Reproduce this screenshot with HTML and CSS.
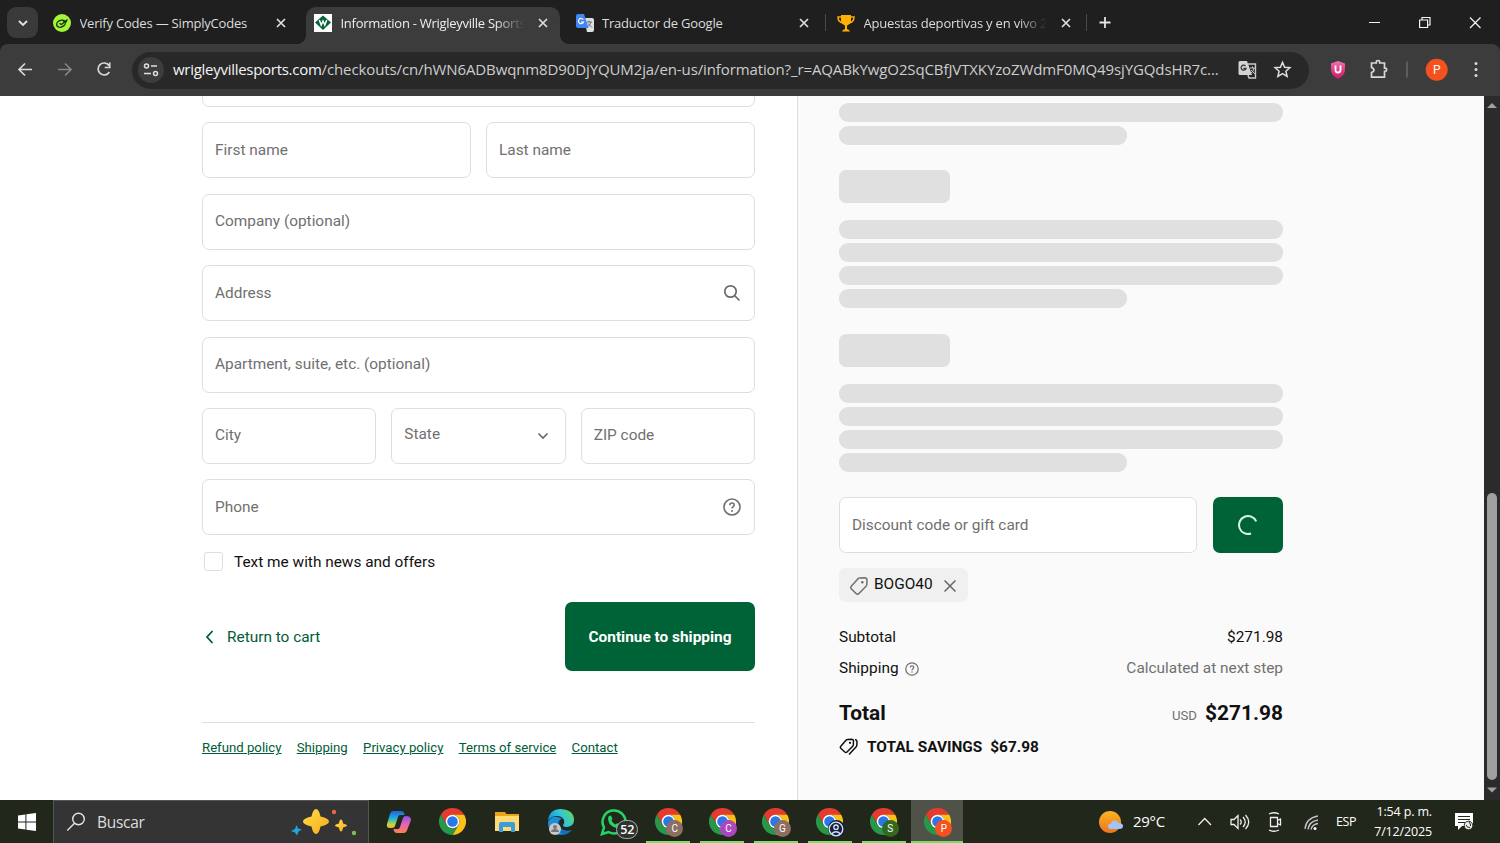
FILE: index.html
```html
<!DOCTYPE html>
<html lang="en">
<head>
<meta charset="utf-8">
<title>Information - Wrigleyville Sports - Checkout</title>
<link rel="stylesheet" href="styles.css">
</head>
<body>
<svg class="defs" width="0" height="0">
  <defs>
    <symbol id="chrome" viewBox="0 0 24 24">
      <path fill="#e33b2e" d="M1.6 6A12 12 0 0 1 22.4 6L12 6.5A6 6 0 0 0 6.8 15Z"/>
      <path fill="#fbc116" d="M22.4 6A12 12 0 0 1 12 24L17.2 15A6 6 0 0 0 12 6Z"/>
      <path fill="#279847" d="M12 24A12 12 0 0 1 1.6 6L6.8 15A6 6 0 0 0 17.2 15Z"/>
      <circle cx="12" cy="12" r="6" fill="#fff"/><circle cx="12" cy="12" r="4.7" fill="#2878ea"/>
    </symbol>
    <symbol id="close" viewBox="0 0 18 18"><path d="M5 5l8 8M13 5l-8 8" fill="none" stroke="#dedede" stroke-width="1.7"/></symbol>
    <symbol id="help" viewBox="0 0 18 18"><g fill="none" stroke="#707070" stroke-width="1.6"><circle cx="9" cy="9" r="8"/><path d="M6.8 7.2C6.8 4.2 11.3 4.3 11.2 7C11.1 8.7 9 8.7 9 10.6"/></g><circle cx="9" cy="12.9" r="1" fill="#707070"/></symbol>
    <linearGradient id="cop1" x2="0" y2="1"><stop offset="0" stop-color="#1d62e8"/><stop offset=".45" stop-color="#21b5d2"/><stop offset=".8" stop-color="#c4d43c"/><stop offset="1" stop-color="#ffb02e"/></linearGradient>
    <linearGradient id="cop2" x2="0" y2="1"><stop offset="0" stop-color="#8d54e8"/><stop offset=".5" stop-color="#e864b4"/><stop offset="1" stop-color="#ff8050"/></linearGradient>
    <linearGradient id="edge1" x1="0" y1=".6" x2="1" y2=".2"><stop offset="0" stop-color="#158edb"/><stop offset=".5" stop-color="#31c3df"/><stop offset="1" stop-color="#5bd95c"/></linearGradient>
    <linearGradient id="sun" x2="0" y2="1"><stop offset="0" stop-color="#f9b424"/><stop offset="1" stop-color="#ef741e"/></linearGradient>
    <linearGradient id="star" x2="1" y2="1"><stop offset="0" stop-color="#ffdf4a"/><stop offset="1" stop-color="#f8a917"/></linearGradient>
    <linearGradient id="shield" x2="0" y2="1"><stop offset="0" stop-color="#ef78ae"/><stop offset=".5" stop-color="#e23b87"/><stop offset="1" stop-color="#d01c68"/></linearGradient>
  </defs>
</svg>

<header class="tabstrip">
  <button class="tab-search"><svg width="12" height="8" viewBox="0 0 12 8"><path d="M2 2l4 4 4-4" fill="none" stroke="#e4e4e4" stroke-width="1.8"/></svg></button>
  <div class="tab tab-codes">
    <svg class="favicon" viewBox="0 0 18 18"><circle cx="9" cy="9" r="9" fill="#a4f43c"/><g fill="none" stroke="#17330c" stroke-width="1.4"><ellipse cx="8" cy="9.700" rx="4.500" ry="3.300" transform="rotate(-25 8 9.700)"/><path d="M6.500 9.300l2 1.200 6-5M10 7l4 .8"/></g></svg>
    <span class="title">Verify Codes — SimplyCodes</span><svg class="x"><use href="#close"/></svg>
  </div>
  <div class="tab tab-active">
    <svg class="favicon" viewBox="0 0 18 18"><path fill="#fff" d="M0 0h18v18H0z"/><path fill="#07623b" d="M9 1.500L17 8.500 9 16 1 8.500z"/><path d="M5.300 6l1.900 5L9 7l1.800 4 1.900-5" fill="none" stroke="#fff" stroke-width="1.5"/></svg>
    <span class="title fade">Information - Wrigleyville Sports</span><svg class="x"><use href="#close"/></svg>
  </div>
  <div class="tab tab-translate">
    <svg class="favicon" viewBox="0 0 18 18"><path fill="#dce0e5" d="M8 4h8q2 0 2 2v10q0 2-2 2h-5z"/><path fill="#4285f4" d="M2 0h6l4.500 14H2q-2 0-2-2V2Q0 0 2 0z"/><path d="M7.300 5.700A2.600 2.600 0 1 0 7.500 8H5" fill="none" stroke="#fff" stroke-width="1.200"/><path d="M10.500 8h5.500M13 6.500V8M15 8q-1 4-4 5M12 9.500l4 4" fill="none" stroke="#62717e"/></svg>
    <span class="title">Traductor de Google</span><svg class="x"><use href="#close"/></svg>
  </div>
  <div class="tab tab-bets">
    <svg class="favicon" viewBox="0 0 18 18"><path d="M5 3H1q0 5 5 6M13 3h4q0 5-5 6" fill="none" stroke="#f8ac08" stroke-width="1.500"/><path fill="#ffb300" d="M4 1h10v5q0 4-4 5.500V15q2.500.5 3 2.500H5q.5-2 3-2.500v-3.500Q4 10 4 6z"/></svg>
    <span class="title fade">Apuestas deportivas y en vivo 24</span><svg class="x"><use href="#close"/></svg>
  </div>
  <svg class="new-tab" width="36" height="44" viewBox="0 0 36 44"><path d="M18 17v11M12.500 22.500h11" stroke="#e3e3e3" stroke-width="1.800"/></svg>
  <svg class="window-controls" width="150" height="44" viewBox="0 0 150 44"><g fill="none" stroke="#f4f4f4" stroke-width="1.200"><path d="M19 22.500h11M69.600 20h8v7.500h-8zM72 20v-2.500h8V25h-2.400M120 17.500l10.500 10.500M130.500 17.500L120 28"/></g></svg>
</header>

<nav class="toolbar">
  <svg class="nav-icons" width="132" height="52" viewBox="0 0 132 52"><g fill="none" stroke-width="1.700"><path stroke="#d9d9d9" d="M32 25.500H19.500M25 19.500l-6 6 6 6"/><path stroke="#858585" d="M58 25.500h12.500M65 19.500l6 6-6 6"/><path stroke="#d9d9d9" d="M109 21.500a6 6 0 1 0 .3 6.500M109.700 18.500v5h-5"/></g></svg>
  <div class="omnibox">
    <svg class="site-info" width="26" height="26" viewBox="0 0 26 26"><circle cx="13" cy="13" r="13" fill="#3d3d3d"/><g fill="none" stroke="#dedede" stroke-width="1.500"><circle cx="8.500" cy="9" r="2"/><path d="M13 9h6M6 16.500h7"/><circle cx="17.500" cy="16.500" r="2"/></g></svg>
    <span class="url"><b>wrigleyvillesports.com</b>/checkouts/cn/hWN6ADBwqnm8D90DjYQUM2ja/en-us/information?_r=AQABkYwgO2SqCBfJVTXKYzoZWdmF0MQ49sjYGQdsHR7c...</span>
    <svg class="omni-icons" width="60" height="26" viewBox="0 0 60 26"><path fill="#d3d3d3" d="M3 4h7l5 14H3q-1.500 0-1.500-1.500v-11Q1.500 4 3 4z"/><path d="M11 7h7.500v14H12l-1-3" fill="none" stroke="#c9c9c9" stroke-width="1.400"/><path d="M8.500 9A2.500 2.500 0 1 0 9 11.500H6.500" fill="none" stroke="#333" stroke-width="1.300"/><path d="M13 11h5M15.500 9.500V11M17 11q-.5 4-3.500 5.500M14 13l4 4" stroke="#c9c9c9" fill="none"/><path d="M45.500 5.300l2.100 4.900 5.300.5-4 3.500 1.200 5.200-4.600-2.800-4.600 2.800 1.200-5.200-4-3.500 5.300-.5z" fill="none" stroke="#dedede" stroke-width="1.500"/></svg>
  </div>
  <svg class="actions" width="191" height="52" viewBox="0 0 191 52"><path fill="url(#shield)" d="M29 17l7 2.500V26q0 5-7 9-7-4-7-9v-6.500z"/><path d="M26.500 21.500V26q0 2.500 2.500 2.500t2.500-2.500v-4.500" fill="none" stroke="#fff" stroke-width="1.800"/><path d="M62.500 19h4.800v-1.200q0-1.300 1.700-1.300t1.700 1.300V19h4.800v5.200h.6q1.600 0 1.600 1.600t-1.600 1.600h-.6v5.800h-13v-4.700q2.400-.6 2.400-2.500t-2.400-2.500z" fill="none" stroke="#d8d8d8" stroke-width="1.700"/><path stroke="#686868" stroke-width="1.500" d="M98 17.500v16"/><circle cx="127.700" cy="25.700" r="11" fill="#f4511e"/><text x="127.700" y="30" class="avatar-text">P</text><g fill="#d8d8d8"><circle cx="167" cy="19.500" r="1.500"/><circle cx="167" cy="25.500" r="1.500"/><circle cx="167" cy="31.500" r="1.500"/></g></svg>
</nav>

<main class="page">
  <section class="checkout">
    <div class="form">
      <div class="field clipped"></div>
      <div class="row"><div class="field">First name</div><div class="field">Last name</div></div>
      <div class="field">Company (optional)</div>
      <div class="field">Address<svg width="18" height="18" viewBox="0 0 18 18"><g fill="none" stroke="#6b6b6b" stroke-width="1.700"><circle cx="7.500" cy="7.500" r="5.700"/><path d="M11.500 11.500l5 5"/></g></svg></div>
      <div class="field">Apartment, suite, etc. (optional)</div>
      <div class="row thirds"><div class="field">City</div><div class="field state">State<svg width="12" height="8" viewBox="0 0 12 8"><path d="M1.500 1.500L6 6l4.500-4.500" fill="none" stroke="#666" stroke-width="1.600"/></svg></div><div class="field">ZIP code</div></div>
      <div class="field">Phone<svg width="18" height="18"><use href="#help"/></svg></div>
    </div>
    <label class="offers"><i></i><span>Text me with news and offers</span></label>
    <div class="form-actions">
      <a class="return"><svg width="10" height="14" viewBox="0 0 10 14"><path d="M7.500 1L2 7l5.500 6" fill="none" stroke="#005c35" stroke-width="1.800"/></svg><span>Return to cart</span></a>
      <button class="continue"><span>Continue to shipping</span></button>
    </div>
    <footer class="policies"><a>Refund policy</a><a>Shipping</a><a>Privacy policy</a><a>Terms of service</a><a>Contact</a></footer>
  </section>

  <aside class="summary">
    <div class="skeleton first"><i></i><i class="short"></i></div>
    <div class="pill"></div>
    <div class="skeleton"><i></i><i></i><i></i><i class="short"></i></div>
    <div class="pill"></div>
    <div class="skeleton"><i></i><i></i><i></i><i class="short"></i></div>
    <div class="discount"><div class="field">Discount code or gift card</div><button><svg width="22" height="22" viewBox="0 0 22 22"><path d="M19.200 7.300A9 9 0 1 0 14 19.500" fill="none" stroke="#d9f4e5" stroke-width="2"/></svg></button></div>
    <div class="chip"><svg width="20" height="20" viewBox="0 0 20 20"><path d="M10.500 2l5-.2q2.500 0 2.500 2.400l-.2 4.300q-.1 1-.8 1.700l-7 7.300q-1.500 1.500-3 0l-4.500-4.500q-1.500-1.500 0-3L9 2.700q.6-.7 1.500-.7z" fill="none" stroke="#707070" stroke-width="1.500"/><circle cx="13.300" cy="6.200" r="1.200" fill="#666"/></svg><span>BOGO40</span><svg class="remove" width="12" height="12" viewBox="0 0 12 12"><path d="M.5.5l11 11M11.500.5l-11 11" stroke="#666" stroke-width="1.500"/></svg></div>
    <div class="line subtotal"><span>Subtotal</span><span>$271.98</span></div>
    <div class="line shipping"><span>Shipping <svg width="14" height="14"><use href="#help"/></svg></span><span class="muted">Calculated at next step</span></div>
    <div class="line total"><strong>Total</strong><span><small>USD</small><strong>$271.98</strong></span></div>
    <div class="savings"><svg width="20" height="18" viewBox="0 0 20 18"><g fill="none" stroke="#111" stroke-width="1.500"><path d="M8.500 1.500l4-.2q2 0 2 2l-.2 3.600q0 .7-.6 1.300L8 14q-1 1-2.200 0L2 10.500Q.7 9.300 2 8.100L7 2.200q.6-.7 1.500-.7z"/><path d="M16 1.500q2 .5 2 2l-.2 3.800q0 .8-.6 1.400L10 16.500"/></g><circle cx="11" cy="4.800" r="1.100"/></svg><span>TOTAL SAVINGS</span><span>$67.98</span></div>
  </aside>

  <div class="scrollbar"><svg width="16" height="18" viewBox="0 0 16 18"><path d="M3 12l5-5 5 5z" fill="#a0a0a0"/></svg><div class="thumb"></div><svg width="16" height="18" viewBox="0 0 16 18"><path d="M3 5.500l5 5 5-5z" fill="#a0a0a0"/></svg></div>
</main>

<footer class="taskbar">
  <div class="start"><svg width="18" height="18" viewBox="0 0 18 18"><path fill="#fff" d="M0 2.500l7.400-1v7.100H0zM8.400 1.300L18 0v8.600H8.400zM0 9.500h7.400v7L0 15.500zM8.400 9.500H18V18l-9.600-1.300z"/></svg></div>
  <div class="search">
    <svg width="20" height="20" viewBox="0 0 20 20"><g fill="none" stroke="#e5e5e5" stroke-width="1.400"><circle cx="12.500" cy="7" r="5.800"/><path d="M8.500 11.300L1.300 18.500"/></g></svg>
    <span>Buscar</span>
    <svg class="sparkles" width="70" height="40" viewBox="0 0 70 40"><path fill="url(#star)" d="M27 7q3 0 4.500 7.500 8.500 2 8.500 5t-8.500 5Q30 32 27 32t-4.500-7.500q-8.500-2-8.500-5t8.500-5Q24 7 27 7z"/><path fill="url(#star)" d="M52 17.500q1.500 0 2 4 4 1 4 2t-4 2q-.5 4-2 4t-2-4q-4-1-4-2t4-2q.5-4 2-4z"/><path fill="#20a4e5" d="M7.500 23l1.500 3.500 4 1-3.500 2-1.500 4-2-3-4-1.500 4-2z"/><circle cx="45" cy="10" r="2.200" fill="#ed653d"/><circle cx="65" cy="31" r="2.200" fill="#79bf54"/></svg>
  </div>
  <div class="apps">
    <div class="app"><svg width="26" height="26" viewBox="0 0 26 26"><path fill="url(#cop1)" d="M7 2h8q3 0 3.500 4H14q-1.500 0-2 2L9 17q-.5 2-3 2H4q-4 0-3-4L4 5q1-3 3-3z"/><path fill="url(#cop2)" d="M20 7q5 0 5 4l-3.500 9q-1 4-4 4H11q-3 0-3.500-4H12q1.500 0 2-2l3-9q.5-2 3-2z"/></svg></div>
    <div class="app"><svg width="27" height="27"><use href="#chrome"/></svg></div>
    <div class="app"><svg width="26" height="22" viewBox="0 0 26 22"><path fill="#e8a51b" d="M1 1h10l1.500 2H25v5H1z"/><path fill="#ffda73" d="M1 5h24v15H1z"/><path fill="#3a9ddb" d="M5 21v-8q0-2 2-2h12q2 0 2 2v8h-4v-5H9v5z"/></svg></div>
    <div class="app"><svg width="28" height="28" viewBox="0 0 28 28"><path fill="#1271bd" d="M1 14q0 13 13 13 7 0 11-5-6 2-10-1-5-4-2-9z"/><path fill="url(#edge1)" d="M1 13Q2 1 14 1q13 1 13 11 0 6-7 7-4 0-4-2 2-2 1-5-2-4-7-4-6 0-9 5z"/><path fill="#1a91d7" d="M1 14q3-6 9-5 3 0 5 2-5 1-5 6 0 6 6 9Q2 28 1 14z"/><circle cx="8" cy="21" r="6" fill="#c7c8ca"/><circle cx="8" cy="19" r="2" fill="#777"/><path fill="#777" d="M4 24q0-3 4-3t4 3z"/></svg></div>
    <div class="app whatsapp"><svg width="28" height="28" viewBox="0 0 28 28"><path d="M2 26l2-6.500A11.500 11.500 0 1 1 8.500 24z" fill="none" stroke="#25d366" stroke-width="2.500"/><path d="M9 8l2-.5 1.500 3.500-1 1.500q1.500 3 4 4l1.500-1.300 3.300 1.600q0 3-3.300 3.200Q9 19 8 11q0-2 1-3z" fill="#25d366"/></svg><em>52</em></div>
    <div class="app open"><svg width="27" height="27"><use href="#chrome"/></svg><em class="brown">C</em></div>
    <div class="app open"><svg width="27" height="27"><use href="#chrome"/></svg><em class="purple">C</em></div>
    <div class="app open"><svg width="27" height="27"><use href="#chrome"/></svg><em class="brown">G</em></div>
    <div class="app open"><svg width="27" height="27"><use href="#chrome"/></svg><em class="navy"><svg width="16" height="16" viewBox="0 0 16 16"><g fill="none" stroke="#d4e3ff" stroke-width="1.300"><circle cx="8" cy="8" r="6.800"/><circle cx="8" cy="6.200" r="2.200"/><path d="M3.500 13q4.500-4.500 9 0"/></g></svg></em></div>
    <div class="app open"><svg width="27" height="27"><use href="#chrome"/></svg><em class="green">S</em></div>
    <div class="app open current"><svg width="27" height="27"><use href="#chrome"/></svg><em class="orange">P</em></div>
  </div>
  <div class="tray">
    <svg width="26" height="26" viewBox="0 0 26 26"><circle cx="12" cy="13" r="11" fill="url(#sun)"/><path fill="#a1c4fa" d="M13 20q-3 0-3-2.500t3-2.700q.5-3.300 3.700-3.300 2.800 0 3.800 2.500 4.500 0 4.500 3t-3.500 3z"/></svg>
    <span class="temp">29°C</span>
    <svg class="tray-icons" width="132" height="43" viewBox="0 0 132 43"><g fill="none" stroke="#eee" stroke-width="1.300"><path d="M12.500 25l6.200-6.500L25 25M45 19.500h3l4-4v13l-4-4h-3zM54 19.500q2.500 2.500 0 5M57 17q4.500 5 0 10M59.500 15q6.500 7 0 14"/><path d="M84.500 17.500h7v9h-7zM91.500 20.500l3-1.500v6l-3-1.500M83 14q5-2.500 10 0M83 30q5 2.500 10 0"/></g><g fill="none" stroke="#c6c6c6" stroke-width="1.300"><path d="M119 29Q120 18 132 16M122 29.500q1-8 10-9.500M125 29.500q1-5 7-6"/></g><circle cx="129" cy="28.500" r="1.500" fill="#fff"/></svg>
    <span class="lang">ESP</span>
    <div class="clock"><span>1:54 p. m.</span><span>7/12/2025</span></div>
    <svg class="notice" width="20" height="20" viewBox="0 0 20 20"><path fill="#fff" d="M1 1h18v13H8l-4 4v-4H1z"/><path d="M4 4.500h12M4 7.500h12M4 10.500h7" stroke="#25291f" stroke-width="1.200"/><circle cx="14.500" cy="13.500" r="4.300" fill="#eee" stroke="#25291f"/><path d="M12 13q1 3 4 2.500M15 10q2 2 1.500 4" fill="none" stroke="#25291f"/></svg>
  </div>
</footer>
</body>
</html>
```
FILE: styles.css
```css
* { box-sizing: border-box; }
body { margin: 0; width: 1500px; height: 843px; overflow: hidden; background: #202020; font-family: "Open Sans", sans-serif; }
svg { display: block; flex: none; }
.defs { position: absolute; }
button { border: 0; padding: 0; display: flex; align-items: center; justify-content: center; }
em, i { font-style: normal; display: block; }

/* Browser tabs */
.tabstrip { height: 44px; display: flex; align-items: flex-end; padding-left: 7px; background: #1f1f1f; }
.tab-search { width: 31px; height: 31px; margin: 0 7px 6px 0; border-radius: 9px; background: #3a3a3a; }
.tab { height: 37px; padding-bottom: 5px; display: flex; align-items: center; color: #dcdcdc; font-size: 13px; letter-spacing: -.2px; }
.favicon { width: 18px; height: 18px; margin-right: 8.500px; }
.title { flex: 1; min-width: 0; white-space: nowrap; overflow: hidden; line-height: 22px; }
.fade { mask-image: linear-gradient(90deg, #000 84%, transparent 100%); margin-right: 10px; }
.x { width: 18px; height: 18px; }
.tab-codes { width: 261px; padding-left: 8px; padding-right: 16px; }
.tab-active { position: relative; width: 254px; padding-left: 8px; padding-right: 8px; background: #3c3c3c; border-radius: 10px 10px 0 0; color: #eee; letter-spacing: -.27px; }
.tab-active::before, .tab-active::after { content: ""; position: absolute; bottom: 0; width: 10px; height: 10px; }
.tab-active::before { left: -10px; background: radial-gradient(circle at 0 0, transparent 10px, #3c3c3c 10.500px); }
.tab-active::after { right: -10px; background: radial-gradient(circle at 100% 0, transparent 10px, #3c3c3c 10.500px); }
.tab-translate { width: 266px; padding-left: 15.500px; padding-right: 13px; background: linear-gradient(#4a4a4a, #4a4a4a) right 7px / 1px 17px no-repeat; }
.tab-bets { width: 261px; padding-left: 11px; padding-right: 12px; background: linear-gradient(#4a4a4a, #4a4a4a) right 7px / 1px 17px no-repeat; }
.window-controls { margin-left: auto; }

/* Address bar */
.toolbar { height: 52px; display: flex; align-items: center; background: #3c3c3c; border-radius: 8px 8px 0 0; }
.omnibox { width: 1177px; height: 37px; padding-left: 6px; border-radius: 19px; background: #282828; display: flex; align-items: center; }
.url { width: 1060px; margin: -2px 0 0 9px; white-space: nowrap; color: #cdcdcd; font-size: 15px; letter-spacing: -.113px; line-height: 24px; }
.url b { color: #f4f4f4; font-weight: 400; letter-spacing: -.28px; }
.omni-icons { margin-left: 4px; }
.avatar-text { font: 12px Roboto, sans-serif; fill: #fff; text-anchor: middle; }

/* Checkout */
.page { height: 704px; display: flex; background: #fff; font-family: Roboto, sans-serif; font-size: 15.400px; color: #111; overflow: hidden; }
.checkout { width: 798px; padding: 0 42px 0 202px; border-right: 1px solid #dedede; }
.form { display: flex; flex-direction: column; gap: 15.400px; margin-top: -45px; }
.field { flex: none; height: 56px; padding: 0 13px 1px 12px; border: 1px solid #dedede; border-radius: 7px; background: #fff; color: #707070; display: flex; align-items: center; justify-content: space-between; }
.row { display: grid; grid-template-columns: 1fr 1fr; gap: 15px; }
.thirds { grid-template-columns: 1fr 1fr 1fr; }
.state { padding-right: 16px; padding-bottom: 3px; }
.state svg { margin-top: 3px; }
.offers { height: 21px; margin-top: 16px; padding-left: 2px; display: flex; align-items: center; gap: 11px; }
.offers i { width: 19px; height: 19px; border: 1px solid #dedede; border-radius: 3px; }
.form-actions { margin-top: 30px; height: 69px; display: flex; align-items: center; justify-content: space-between; }
.return { display: flex; align-items: center; gap: 12px; margin-left: 3px; color: #005c35; }
.continue { width: 190px; height: 69px; border-radius: 7px; background: #006338; color: #fff; font: 700 15.400px Roboto, sans-serif; }
.policies { margin-top: 51px; padding-top: 16px; border-top: 1px solid #dedede; display: flex; gap: 15.300px; color: #005c35; font-size: 13.200px; line-height: 18px; white-space: nowrap; }
.policies a { text-decoration: underline; }
.summary { width: 686px; padding: 6.500px 201px 0 41px; background: #fafafa; }
.skeleton { display: flex; flex-direction: column; gap: 4px; margin-top: 17px; }
.skeleton i { height: 19px; border-radius: 9px; background: #e0e0e0; }
.skeleton.first { margin-top: 0; }
.skeleton .short { width: 288px; }
.pill { width: 111px; height: 33px; margin-top: 25.500px; border-radius: 7px; background: #e0e0e0; }
.discount { display: flex; gap: 16px; margin-top: 25.500px; }
.discount .field { width: 358px; }
.discount button { width: 70px; height: 56px; border-radius: 7px; background: #006338; }
.chip { width: 129px; height: 34px; margin-top: 15px; padding-left: 10px; border-radius: 7px; background: #f0f0f0; display: flex; align-items: center; }
.chip span { margin: -3px 11px 0 5px; width: 59px; }
.chip svg { margin-top: 1px; }
.line { display: flex; justify-content: space-between; align-items: center; height: 22px; }
.line > span { display: flex; align-items: center; gap: 6px; }
.subtotal { margin-top: 23.500px; }
.shipping { margin-top: 9px; }
.shipping svg { margin-top: 2px; }
.muted { color: #707070; }
.total { margin-top: 18px; height: 32px; font-size: 20.900px; }
.total strong { font-weight: 700; }
.line.total > span { gap: 8px; align-items: baseline; }
.total small { font-size: 13.200px; color: #707070; }
.savings { height: 22px; margin-top: 7px; display: flex; align-items: center; gap: 8px; font-weight: 700; }
.scrollbar { width: 16px; background: #2b2b2b; display: flex; flex-direction: column; }
.thumb { width: 10px; height: 287px; margin: 379px 0 2px 3px; border-radius: 5px; background: #9f9f9f; }

/* Taskbar */
.taskbar { height: 43px; display: flex; background: #22271c; color: #fff; }
.start { width: 53px; display: flex; align-items: center; justify-content: center; }
.search { width: 316px; padding-left: 12px; display: flex; align-items: center; background: #343434; border: 1px solid #555; border-bottom: 0; color: #ddd; font-size: 15.500px; letter-spacing: -.3px; }
.search span { margin-left: 11px; }
.sparkles { margin-left: auto; margin-right: 9px; }
.apps { display: flex; gap: 1.850px; margin-left: 4px; }
.app { position: relative; width: 52px; display: flex; align-items: center; justify-content: center; }
.app.open::after { content: ""; position: absolute; left: 4px; bottom: 0; width: 44px; height: 2px; background: #7bdd62; }
.app.current { background: #4e5249; }
.app.current::after { left: 0; width: 52px; }
.app em { position: absolute; left: 24px; top: 20px; width: 17px; height: 17px; border-radius: 50%; font: 10px/17px Roboto, sans-serif; text-align: center; }
.app em svg { margin: .5px; }
.brown { background: #8d6e63; }
.purple { background: #ab47bc; }
.navy { background: #172239; }
.green { background: #33691e; }
.orange { background: #f4511e; }
.app.whatsapp em { left: 28px; top: 20px; width: 22px; height: 19px; border: 1px solid #aaa; border-radius: 11px; background: #30332d; font: 600 12.500px/17px "Open Sans", sans-serif; }
.tray { margin-left: auto; width: 402px; display: flex; align-items: center; letter-spacing: -.3px; }
.temp { width: 42px; margin: -1px 0 0 9px; font-size: 15px; }
.tray-icons { margin-left: 11px; }
.lang { margin-left: 18px; width: 28px; font-size: 12.500px; letter-spacing: -.4px; }
.clock { width: 62px; margin-left: 6px; display: flex; flex-direction: column; align-items: flex-end; font-size: 12.500px; letter-spacing: -.15px; line-height: 20px; white-space: nowrap; }
.notice { margin-left: 22px; }
```
